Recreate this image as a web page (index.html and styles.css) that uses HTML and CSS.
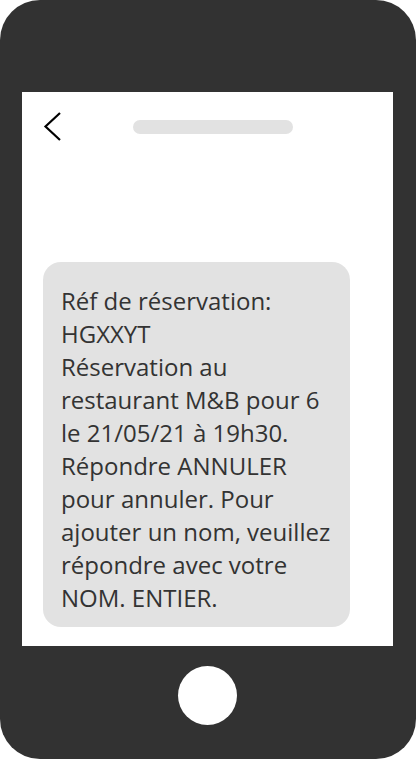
FILE: index.html
```html
<!DOCTYPE html>
<html lang="fr">
<head>
<meta charset="utf-8">
<title>SMS</title>
<link rel="stylesheet" href="styles.css">
</head>
<body>
<div class="phone">
  <div class="screen">
    <div class="topbar">
      <svg class="back" width="20" height="30" viewBox="0 0 20 30" aria-hidden="true">
        <polyline points="17,1 2.5,14.5 17,28" fill="none" stroke="#000" stroke-width="2.2"/>
      </svg>
      <div class="pill"></div>
    </div>
    <div class="bubble">Réf de réservation:<br>HGXXYT<br>Réservation au<br>restaurant M&amp;B pour 6<br>le 21/05/21 à 19h30.<br>Répondre ANNULER<br>pour annuler. Pour<br>ajouter un nom, veuillez<br>répondre avec votre<br>NOM. ENTIER.</div>
  </div>
  <div class="home"></div>
</div>
</body>
</html>
```
FILE: styles.css
```css
html, body {
  margin: 0;
  padding: 0;
  background: #ffffff;
}
.phone {
  width: 416px;
  height: 759px;
  box-sizing: border-box;
  background: #323232;
  border-radius: 40px;
  padding: 92px 23px 0 22px;
  display: flex;
  flex-direction: column;
  align-items: center;
}
.screen {
  width: 371px;
  height: 554px;
  background: #ffffff;
  box-sizing: border-box;
  padding: 0 0 0 21px;
}
.topbar {
  height: 170px;
  display: flex;
  align-items: flex-start;
}
.back {
  display: block;
  margin: 20px 0 0 0;
}
.pill {
  width: 160px;
  height: 14px;
  border-radius: 7px;
  background: #e2e2e2;
  margin: 28px 0 0 70px;
}
.bubble {
  width: 307px;
  box-sizing: border-box;
  background: #e2e2e2;
  border-radius: 18px;
  padding: 22px 0 13px 18px;
  font-family: "Open Sans", sans-serif;
  font-size: 24px;
  line-height: 33px;
  white-space: nowrap;
  color: #333333;
}
.home {
  width: 59px;
  height: 59px;
  border-radius: 50%;
  background: #ffffff;
  margin-top: 20px;
}
```
